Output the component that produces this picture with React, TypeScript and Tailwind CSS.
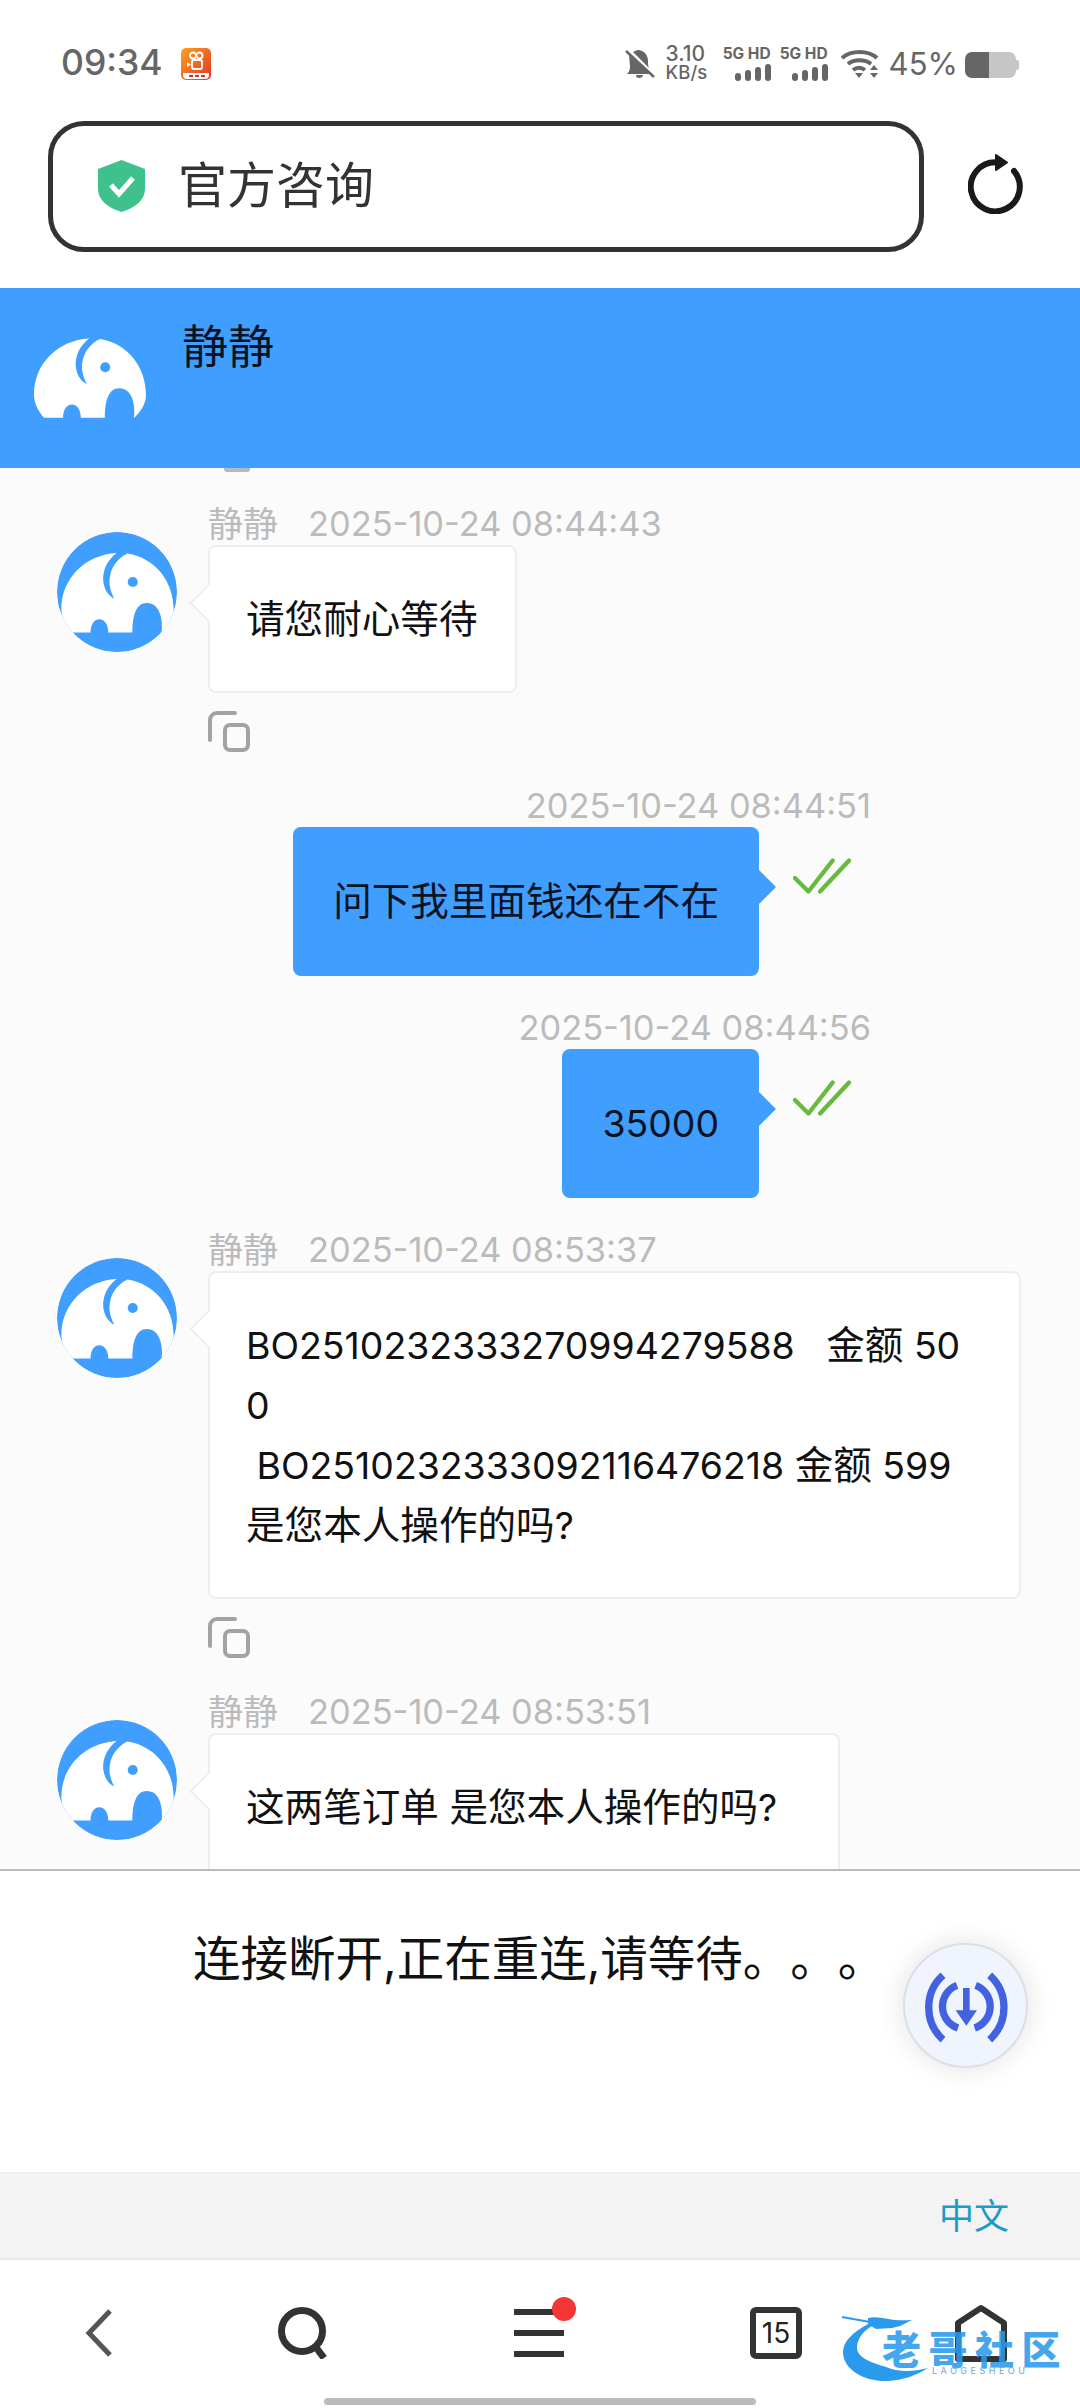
import type { ReactNode } from "react";

const BLUE = "#409eff";

// elephant mark, shared by the header logo and the round avatars
function ElephantShape() {
  return (
    <>
      <path
        fill="#fff"
        d="M30 238C8 212 0 190 0 168 0 76 72 6 165 1 140 20 122 50 125 85c3 25 15 43 33 52-10-19-18-42-13-67C150 40 170 15 197 2c83 13 138 83 138 168 0 25-15 50-35 68-1 0-1 0-1 0 4-23 1-88-44-88-33 0-43 40-43 88h-72c0-23-10-40-27-40-16 0-26 17-26 40Z"
      />
      <circle cx="213" cy="87" r="15" fill={BLUE} />
    </>
  );
}

function Avatar() {
  return (
    <svg viewBox="0 0 358 358" className="h-[120px] w-[120px] shrink-0 rounded-full">
      <circle cx="179" cy="179" r="179" fill={BLUE} />
      <clipPath id="avatar-clip">
        <circle cx="179" cy="179" r="179" />
      </clipPath>
      <g clipPath="url(#avatar-clip)">
        <g transform="translate(13 62)">
          <ElephantShape />
        </g>
      </g>
    </svg>
  );
}

function CopyIcon() {
  return (
    <svg viewBox="0 0 42 41" className="h-[41px] w-[42px]" fill="none" stroke="#a3a3a3" strokeWidth="4">
      <path d="M27 2H9a7 7 0 0 0-7 7v20" strokeLinecap="round" />
      <rect x="17" y="14" width="23" height="25" rx="5" />
    </svg>
  );
}

function DoubleCheck() {
  return (
    <svg viewBox="0 0 60 36" className="mt-[31px] ml-[34px] h-[36px] w-[58px] shrink-0" fill="none" stroke="#67ba3f" strokeWidth="4.500" strokeLinecap="round" strokeLinejoin="round">
      <path d="M2 20l14 14L41 2" />
      <path d="M28 34L58 2" />
    </svg>
  );
}

// Latin runs use Inter slightly smaller so digits sit level with the CJK text;
// each line gets a fixed box because the two fonts have different metrics
function MixedText({ text }: { text: string }) {
  return (
    <>
      {text.split("\n").map((line, l) => (
        <div key={l} className="h-[60px] leading-[60px]">
          {line
            .split(/([\x00-\x7f]+)/)
            .filter(Boolean)
            .map((run, i) =>
              /^[\x00-\x7f]+$/.test(run) ? (
                <span key={i} className="text-[37.4px]">
                  {run}
                </span>
              ) : (
                <span key={i}>{run}</span>
              ),
            )}
        </div>
      ))}
    </>
  );
}

function MetaLine({ name, time }: { name?: string; time: string }) {
  return (
    <div className="flex h-[42px] items-center leading-[42px] whitespace-pre text-[#bbbbbb]">
      {name && <span className="mr-[30px] text-[35px]">{name}</span>}
      <span className="text-[34.4px]">{time}</span>
    </div>
  );
}

function IncomingMessage({
  time,
  children,
  copyable = true,
  bubbleClass = "w-fit",
}: {
  time: string;
  children: string;
  copyable?: boolean;
  bubbleClass?: string;
}) {
  return (
    <div className="flex pl-[57px]">
      <div className="mt-[29px] mr-[31px]">
        <Avatar />
      </div>
      <div className="flex flex-col">
        <MetaLine name="静静" time={time} />
        <div className={`relative rounded-[8px] border-2 border-[#eeeeee] bg-white py-[42px] pr-[38px] pl-[36px] text-[38.6px] whitespace-pre text-[#111111] ${bubbleClass}`}>
          <span className="absolute top-[42px] left-[-15px] h-[28px] w-[28px] rotate-45 border-b-2 border-l-2 border-[#eeeeee] bg-white" />
          <div className="relative">
            <MixedText text={children} />
          </div>
        </div>
        {copyable && (
          <div className="mt-[18px] h-[43px]">
            <CopyIcon />
          </div>
        )}
      </div>
    </div>
  );
}

function OutgoingMessage({ time, children }: { time: string; children: string }) {
  return (
    <div className="flex flex-col items-end pr-[229px]">
      <div className="mr-[-20px]">
        <MetaLine time={time} />
      </div>
      <div className="flex items-start">
        <div className="relative rounded-[8px] bg-[#409eff] px-[40px] pt-[44px] pb-[45px] text-[38.6px] text-[#0a1322]">
          <span className="absolute top-[48px] right-[-12px] h-[24px] w-[24px] rotate-45 bg-[#409eff]" />
          <div className="relative">
            <MixedText text={children} />
          </div>
        </div>
        <DoubleCheck />
      </div>
    </div>
  );
}

function SignalBlock() {
  return (
    <div className="flex w-[48px] flex-col items-end">
      <span className="text-[15.500px] leading-[15px] font-bold whitespace-pre text-[#666666]">5G HD</span>
      <svg viewBox="0 0 36 17" className="mt-[3px] h-[17px] w-[36px]" fill="#666666">
        <rect x="0" y="9" width="6" height="8" rx="3" />
        <rect x="10" y="6" width="6" height="11" rx="3" />
        <rect x="20" y="3" width="6" height="14" rx="3" />
        <rect x="30" y="0" width="6" height="17" rx="3" />
      </svg>
    </div>
  );
}

function NotificationAppIcon() {
  return (
    <svg viewBox="0 0 30 32" className="ml-[18px] h-[32px] w-[30px] shrink-0">
      <defs>
        <linearGradient id="app-tile" x1="0" y1="0" x2="1" y2="1">
          <stop offset="0" stopColor="#f9a51c" />
          <stop offset="1" stopColor="#e8302a" />
        </linearGradient>
      </defs>
      <rect width="30" height="32" rx="5" fill="url(#app-tile)" />
      <path d="M2 25h26v2a4 4 0 0 1-4 4H6a4 4 0 0 1-4-4Z" fill="#fff" />
      <path d="M8 28h4M14 28h4M20 28h4" stroke="#d8302a" strokeWidth="2" />
      <circle cx="12" cy="7.500" r="3" fill="none" stroke="#fff" strokeWidth="1.800" />
      <circle cx="18.500" cy="7.500" r="3" fill="none" stroke="#fff" strokeWidth="1.800" />
      <rect x="11" y="12" width="10" height="9" rx="2" fill="none" stroke="#fff" strokeWidth="1.800" />
      <path d="M6 14l4 2.500L6 19Z" fill="#fff" />
    </svg>
  );
}

function StatusBar() {
  return (
    <div className="flex h-[121px] items-start pt-[48px] pl-[61px] text-[#666666]">
      <span className="text-[35.500px] leading-[30px] font-medium">09:34</span>
      <NotificationAppIcon />
      <svg viewBox="0 0 30 28" className="mt-[2px] ml-[414px] h-[28px] w-[30px]" fill="#666666">
        <path d="M4 5l21 19c-1 0-2 0-3 0H2c2-2 3-4 3-8Zm4-3c2-1 4-2 5-2 6 0 10 5 10 11 0 3 0 5 1 7Z" />
        <path d="M11 25h7c0 2-2 3-4 3s-3-1-3-3Z" />
        <path d="M1 1l28 26" stroke="#666666" strokeWidth="2.500" />
      </svg>
      <div className="mt-[-3px] ml-[11px] flex w-[46px] flex-col text-[21px] leading-[18px] font-medium">
        <span>3.10</span>
        <span className="text-[18.500px]">KB/s</span>
      </div>
      <div className="mt-[-2px] ml-[11px]">
        <SignalBlock />
      </div>
      <div className="mt-[-2px] ml-[9px]">
        <SignalBlock />
      </div>
      <svg viewBox="0 0 38 30" className="ml-[13px] h-[30px] w-[38px]" fill="none" stroke="#666666" strokeWidth="4">
        <path d="M1 10c9-8 26-8 35 0" />
        <path d="M7 16c6-5 17-5 23 0" />
        <path d="M12 22c4-3 8-3 12 0" />
        <path d="M14 25l4 5 4-5Z" fill="#666666" stroke="none" />
        <path d="M29 22l4-5 4 5ZM29 25l4 5 4-5Z" fill="#666666" stroke="none" />
      </svg>
      <span className="mt-[-1px] ml-[10px] text-[31px] leading-[34px]">45%</span>
      <div className="mt-[4px] ml-[7px] flex h-[26px] items-center">
        <div className="h-[26px] w-[24px] rounded-l-[7px] bg-[#666666]" />
        <div className="h-[26px] w-[27px] rounded-r-[7px] bg-[#c6c6c6]" />
        <div className="h-[10px] w-[3px] rounded-r-[2px] bg-[#c6c6c6]" />
      </div>
    </div>
  );
}

function AddressRow() {
  return (
    <div className="flex h-[167px] items-start pl-[48px]">
      <div className="flex h-[131px] w-[876px] items-center rounded-[36px] border-[5px] border-[#333333] pl-[45px]">
        <svg viewBox="0 0 47 52" className="h-[52px] w-[47px]">
          <path d="M23.5 0 47 9v20c0 11-10 19-23.500 23C10 48 0 40 0 29V9Z" fill="#3fc18e" />
          <path d="M13 25l8 9 14-16" fill="none" stroke="#fff" strokeWidth="5" />
        </svg>
        <span className="ml-[33px] text-[49px] leading-[60px] text-[#333333]">官方咨询</span>
      </div>
      <svg viewBox="18 14 56 60" className="mt-[33px] ml-[44px] h-[60px] w-[56px]" fill="none" stroke="#1a1a1a" strokeWidth="6">
        <path d="M64 31A24.500 24.500 0 1 1 46 22.300" strokeLinecap="round" />
        <path d="M46 15l11 7.500L46 30Z" fill="#1a1a1a" strokeWidth="2" strokeLinejoin="round" />
      </svg>
    </div>
  );
}

function ChatHeader() {
  return (
    <div className="flex h-[180px] items-start bg-[#409eff] pl-[34px]">
      <svg viewBox="0 0 335 238" className="mt-[50px] h-[80px] w-[112px]">
        <ElephantShape />
      </svg>
      <span className="mt-[35px] ml-[36px] text-[46px] leading-[46px] text-[#0a1322]">静静</span>
    </div>
  );
}

function ReconnectButton() {
  return (
    <div className="absolute top-[72px] left-[903px] flex h-[125px] w-[125px] items-center justify-center rounded-full border-2 border-[#dcdfe6] bg-[#eff4fd] shadow-[0_0_28px_rgba(0,0,0,0.12)]">
      <svg viewBox="0 0 375 375" className="h-[125px] w-[125px] shrink-0" fill="none" stroke="#4262e0">
        <g strokeWidth="22">
          <path d="M120 97A130 130 0 0 0 120 290" />
          <path d="M260 97A130 130 0 0 1 260 290" />
          <path d="M162 127A68 68 0 0 0 165 255" />
          <path d="M218 127A68 68 0 0 1 215 255" />
        </g>
        <path d="M180 135h20v67h22l-32 46-32-46h22Z" fill="#4262e0" stroke="none" />
      </svg>
    </div>
  );
}

// translucent community logo floating over the toolbar
function Watermark() {
  return (
    <div className="absolute top-[2310px] left-[840px] h-[76px] w-[226px]">
      <svg viewBox="0 0 226 76" className="absolute inset-0 h-[76px] w-[226px]" fill="#2a9bec">
        <path d="M30 13C12 22 3 32 3 42c0 18 22 30 45 29 14-1 28-5 40-13-16 4-30 4-42-1C28 52 17 46 17 38c0-10 7-18 17-23Z" />
        <path d="M28 8c12-3 22 4 44 2L60 16l-8 2-16 1-8-5Z" />
        <path d="M2 7l28 5" stroke="#2a9bec" strokeWidth="2" />
      </svg>
      <span className="absolute top-[18px] left-[42px] text-[39px] leading-[44px] font-black tracking-[7.500px] whitespace-pre text-[#2a9bec]/90">
        老哥社区
      </span>
      <span className="absolute top-[56px] left-[92px] text-[9px] leading-[10px] tracking-[3.500px] text-[#6aa8e0]">LAOGESHEOU</span>
    </div>
  );
}

function BrowserToolbar() {
  return (
    <div className="grid h-[148px] grid-cols-[198px_210px_262px_212px_198px] items-center pt-[1px] pb-[4px]">
      <div className="flex justify-center">
        <svg viewBox="0 0 28 48" className="h-[48px] w-[28px]" fill="none" stroke="#555555" strokeWidth="5">
          <path d="M25 2 4 24l21 22" />
        </svg>
      </div>
      <div className="flex justify-center">
        <svg viewBox="0 0 52 52" className="h-[52px] w-[52px]" fill="none" stroke="#333333" strokeWidth="7">
          <circle cx="25" cy="24" r="20.500" />
          <path d="M38 39l9 12" />
        </svg>
      </div>
      <div className="relative flex h-[48px] w-[50px] flex-col justify-between justify-self-center">
        <span className="h-[6px] w-[42px] bg-[#333333]" />
        <span className="h-[6px] w-[50px] bg-[#333333]" />
        <span className="h-[6px] w-[50px] bg-[#333333]" />
        <span className="absolute top-[-12px] left-[38px] h-[24px] w-[24px] rounded-full bg-[#f43535]" />
      </div>
      <div className="flex justify-center">
        <div className="flex h-[52px] w-[52px] items-center justify-center rounded-[6px] border-[6px] border-[#333333] text-[28px] leading-[30px] text-[#222222]">
          15
        </div>
      </div>
      <div className="flex justify-center">
        <svg viewBox="0 0 52 58" className="h-[58px] w-[52px]" fill="none" stroke="#333333" strokeWidth="6">
          <path d="M3 55V19L26 4l23 15v36Z" strokeLinejoin="round" />
        </svg>
      </div>
    </div>
  );
}

export default function App() {
  return (
    <div className="relative flex h-[2408px] w-[1080px] flex-col overflow-hidden bg-white font-['Inter','Noto_Sans_CJK_SC',sans-serif]">
      <StatusBar />
      <AddressRow />
      <ChatHeader />

      <div className="h-[1402px] overflow-hidden bg-[#fbfbfb]">
        <div className="ml-[224px] h-[4px] w-[26px] rounded-b-[3px] bg-[#b4b8c4]" />
        <div className="flex flex-col gap-[31px] pt-[31px]">
          <IncomingMessage time="2025-10-24 08:44:43">请您耐心等待</IncomingMessage>
          <OutgoingMessage time="2025-10-24 08:44:51">问下我里面钱还在不在</OutgoingMessage>
          <OutgoingMessage time="2025-10-24 08:44:56">35000</OutgoingMessage>
          <IncomingMessage time="2025-10-24 08:53:37" bubbleClass="w-[813px]">
            {"BO2510232333270994279588   金额 50\n0\n BO2510232333092116476218 金额 599\n是您本人操作的吗?"}
          </IncomingMessage>
          <IncomingMessage time="2025-10-24 08:53:51" copyable={false} bubbleClass="w-[632px]">
            这两笔订单 是您本人操作的吗?
          </IncomingMessage>
        </div>
      </div>

      <div className="relative h-[303px] border-t-2 border-[#bbbbbb] pt-[58px] pl-[193px]">
        <p className="text-[47.500px] leading-[60px] whitespace-pre text-[#111111] [text-spacing-trim:space-all]">连接断开,正在重连,请等待。。。</p>
        <ReconnectButton />
      </div>

      <div className="flex h-[86px] items-center justify-end border-t border-[#eeeeee] bg-[#f3f3f3] pr-[71px]">
        <span className="text-[35px] leading-[40px] text-[#1a9cc4]">中文</span>
      </div>

      <div className="border-t-2 border-[#e8e8e8]">
        <BrowserToolbar />
      </div>
      <div className="absolute top-[2398px] left-[324px] h-[7px] w-[432px] rounded-full bg-[#bbbbbb]" />
      <Watermark />
    </div>
  );
}
